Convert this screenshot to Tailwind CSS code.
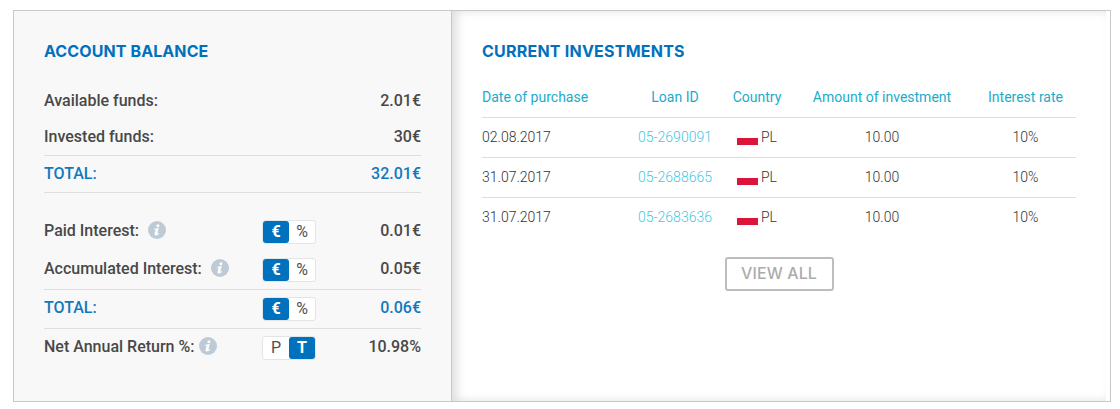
<!DOCTYPE html>
<html lang="en">
  <head>
    <meta charset="utf-8" />
    <meta name="viewport" content="width=device-width, initial-scale=1" />
    <title>Account overview</title>
    <script src="https://cdn.jsdelivr.net/npm/@tailwindcss/browser@4"></script>
  </head>
  <body class="bg-white font-['Roboto',sans-serif]">
    <div class="mt-[10px] ml-[13px] flex h-[392px] w-[1098px] border border-[#c8c8c8]">

      <!-- account balance -->
      <section class="w-[438px] border-r border-[#c8c8c8] bg-[#f8f8f8] pl-[30px] pr-[30px] pt-[28px] text-base font-medium text-[#484848]">
        <h2 class="h-[44px] whitespace-nowrap font-['Inter',sans-serif] text-base leading-6 font-bold tracking-[0.1px] text-[#0071bc]">ACCOUNT BALANCE</h2>

        <div class="flex h-9 items-center justify-between"><span>Available funds:</span><span>2.01€</span></div>
        <div class="flex h-[37px] items-center justify-between border-b border-[#dedede]"><span>Invested funds:</span><span>30€</span></div>
        <div class="flex h-[37px] items-center justify-between border-b border-[#dedede] pb-[1px] text-[#1279c0]"><span>TOTAL:</span><span>32.01€</span></div>

        <div class="mt-[18px] flex h-[39px] items-center">
          <div class="flex w-[218px] items-center gap-[9px]">
            <span>Paid Interest:</span>
            <svg class="-mt-[2px] size-[18px]" viewBox="0 0 18 18"><circle cx="9" cy="9" r="9" fill="#becbd6" /><circle cx="9.9" cy="4.8" r="1.5" fill="#fff" /><path d="M6.3 7.7 10.8 7 9.4 12.3Q9.4 13.1 10.8 12.1L11 12.9Q6.6 15.9 6.5 13.2L7.6 8.8H6.3Z" fill="#fff" /></svg>
          </div>
          <div class="mt-[3px] flex h-6 w-[54px] rounded-[3px] border border-[#e2e4e6] bg-white text-center leading-[22px]">
            <span class="w-[26px] rounded-[3px] bg-[#0071bc] font-bold text-white">€</span>
            <span class="w-[26px] font-normal text-[#505050]">%</span>
          </div>
          <span class="ml-auto">0.01€</span>
        </div>
        <div class="flex h-[40px] items-center border-b border-[#dedede] pb-[2px]">
          <div class="flex w-[218px] items-center gap-[9px]">
            <span>Accumulated Interest:</span>
            <svg class="-mt-[2px] size-[18px]" viewBox="0 0 18 18"><circle cx="9" cy="9" r="9" fill="#becbd6" /><circle cx="9.9" cy="4.8" r="1.5" fill="#fff" /><path d="M6.3 7.7 10.8 7 9.4 12.3Q9.4 13.1 10.8 12.1L11 12.9Q6.6 15.9 6.5 13.2L7.6 8.8H6.3Z" fill="#fff" /></svg>
          </div>
          <div class="mt-[2px] flex h-6 w-[54px] rounded-[3px] border border-[#e2e4e6] bg-white text-center leading-[22px]">
            <span class="w-[26px] rounded-[3px] bg-[#0071bc] font-bold text-white">€</span>
            <span class="w-[26px] font-normal text-[#505050]">%</span>
          </div>
          <span class="ml-auto">0.05€</span>
        </div>
        <div class="flex h-[39px] items-center border-b border-[#dedede] pb-[3px]">
          <span class="w-[218px] text-[#1279c0]">TOTAL:</span>
          <div class="mt-[3px] flex h-6 w-[54px] rounded-[3px] border border-[#e2e4e6] bg-white text-center leading-[22px]">
            <span class="w-[26px] rounded-[3px] bg-[#0071bc] font-bold text-white">€</span>
            <span class="w-[26px] font-normal text-[#505050]">%</span>
          </div>
          <span class="ml-auto text-[#1279c0]">0.06€</span>
        </div>
        <div class="flex h-[38px] items-center pb-[3px]">
          <div class="flex w-[218px] items-center gap-1">
            <span>Net Annual Return %:</span>
            <svg class="-mt-[2px] size-[18px]" viewBox="0 0 18 18"><circle cx="9" cy="9" r="9" fill="#becbd6" /><circle cx="9.9" cy="4.8" r="1.5" fill="#fff" /><path d="M6.3 7.7 10.8 7 9.4 12.3Q9.4 13.1 10.8 12.1L11 12.9Q6.6 15.9 6.5 13.2L7.6 8.8H6.3Z" fill="#fff" /></svg>
          </div>
          <div class="mt-[3px] flex h-6 w-[54px] rounded-[3px] border border-[#e2e4e6] bg-white text-center leading-[22px]">
            <span class="w-[26px] font-normal text-[#505050]">P</span>
            <span class="w-[26px] rounded-[3px] bg-[#0071bc] font-bold text-white">T</span>
          </div>
          <span class="ml-auto">10.98%</span>
        </div>
      </section>

      <!-- current investments -->
      <section class="w-[654px] bg-white pl-[30px] pt-[28px] text-sm font-light text-[#333] shadow-[inset_5px_0_10px_rgba(0,0,0,0.13)]">
        <h2 class="h-[39px] whitespace-nowrap font-['Inter',sans-serif] text-base leading-6 font-bold tracking-[0.23px] text-[#0071bc]">CURRENT INVESTMENTS</h2>

        <div class="grid h-[40px] w-[594px] grid-cols-[143px_100px_64px_186px_101px] items-center border-b border-[#dedede] pb-[2px] text-center font-normal text-[#1babcb]">
          <span class="text-left">Date of purchase</span><span>Loan ID</span><span>Country</span><span>Amount of investment</span><span>Interest rate</span>
        </div>
        <div class="grid h-10 w-[594px] grid-cols-[143px_100px_64px_186px_101px] items-center border-b border-[#dedede] pb-[2px] text-center">
          <span class="text-left">02.08.2017</span>
          <a href="#" class="text-[#45c8e4]">05-2690091</a>
          <span class="flex items-center justify-center gap-[3px]"><i class="mt-[10px] h-[7px] w-[21px] bg-[#dc143c]"></i>PL</span>
          <span>10.00</span><span>10%</span>
        </div>
        <div class="grid h-10 w-[594px] grid-cols-[143px_100px_64px_186px_101px] items-center border-b border-[#dedede] pb-[2px] text-center">
          <span class="text-left">31.07.2017</span>
          <a href="#" class="text-[#45c8e4]">05-2688665</a>
          <span class="flex items-center justify-center gap-[3px]"><i class="mt-[10px] h-[7px] w-[21px] bg-[#dc143c]"></i>PL</span>
          <span>10.00</span><span>10%</span>
        </div>
        <div class="grid h-[39px] w-[594px] grid-cols-[143px_100px_64px_186px_101px] items-center pb-[2px] text-center">
          <span class="text-left">31.07.2017</span>
          <a href="#" class="text-[#45c8e4]">05-2683636</a>
          <span class="flex items-center justify-center gap-[3px]"><i class="mt-[10px] h-[7px] w-[21px] bg-[#dc143c]"></i>PL</span>
          <span>10.00</span><span>10%</span>
        </div>

        <div class="flex w-[594px] justify-center pt-5">
          <a href="#" class="h-[34px] w-[109px] rounded-[3px] border-2 border-[#bdbdbd] text-center font-['Inter',sans-serif] text-base leading-[29px] font-medium tracking-[0.1px] whitespace-nowrap text-[#acacac]">VIEW ALL</a>
        </div>
      </section>
    </div>
  </body>
</html>
